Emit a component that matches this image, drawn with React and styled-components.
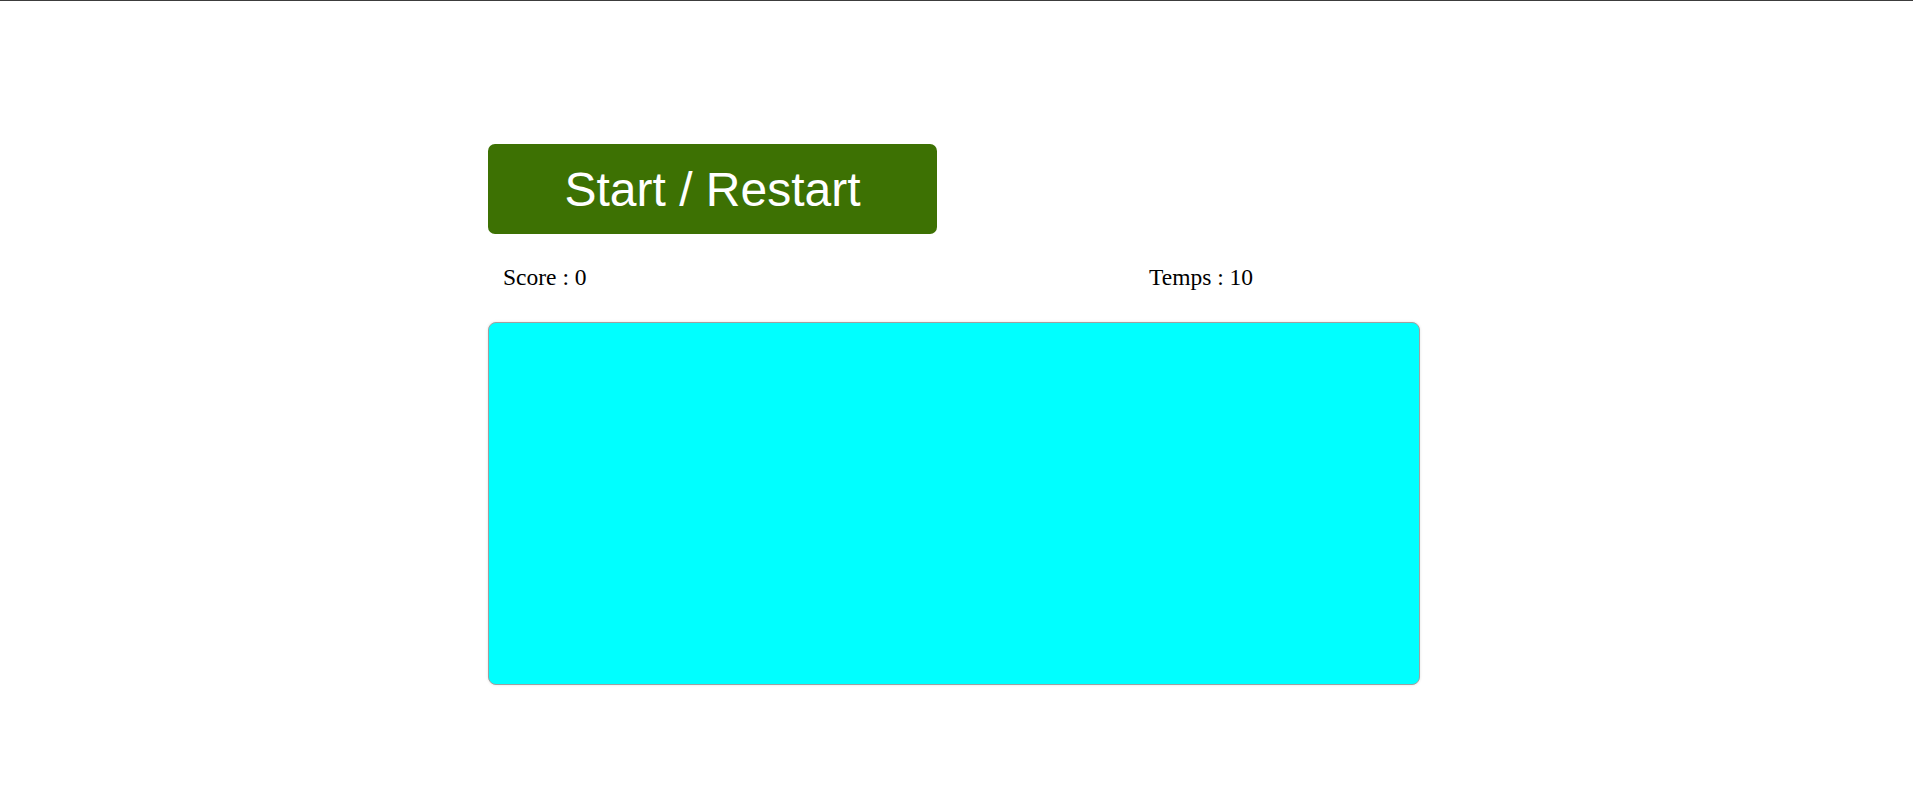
import styled, { createGlobalStyle } from "styled-components";

const GlobalStyle = createGlobalStyle`
  html, body {
    margin: 0;
    padding: 0;
    background: #ffffff;
  }
  body {
    font-family: "Liberation Serif", "Times New Roman", serif;
  }
`;

const Page = styled.div`
  border-top: 1px solid #3c3c3c;
  min-height: 808px;
  box-sizing: border-box;
`;

const Game = styled.main`
  width: 932px;
  margin-left: 488px;
  padding-top: 143px;
  display: flex;
  flex-direction: column;
`;

const StartButton = styled.button`
  width: 449px;
  height: 90px;
  border: none;
  border-radius: 7px;
  background-color: #3d7103;
  color: #ffffff;
  font-family: "Liberation Sans", Arial, sans-serif;
  font-size: 48px;
  cursor: pointer;
  padding: 0;
`;

const Stats = styled.div`
  display: grid;
  grid-template-columns: 646px 1fr;
  padding-left: 15px;
  margin-top: 30px;
  font-size: 23.5px;
  color: #000000;
`;

const Stat = styled.span`
  line-height: 26px;
`;

const Board = styled.div`
  margin-top: 32px;
  height: 363px;
  box-sizing: border-box;
  background-color: #00ffff;
  border: 1px solid #a0a0a0;
  border-radius: 8px;
  box-shadow: 0 0 3px rgba(0, 0, 0, 0.12);
`;

export default function App() {
  return (
    <Page>
      <GlobalStyle />
      <Game>
        <StartButton>Start / Restart</StartButton>
        <Stats>
          <Stat>Score : 0</Stat>
          <Stat>Temps : 10</Stat>
        </Stats>
        <Board />
      </Game>
    </Page>
  );
}
